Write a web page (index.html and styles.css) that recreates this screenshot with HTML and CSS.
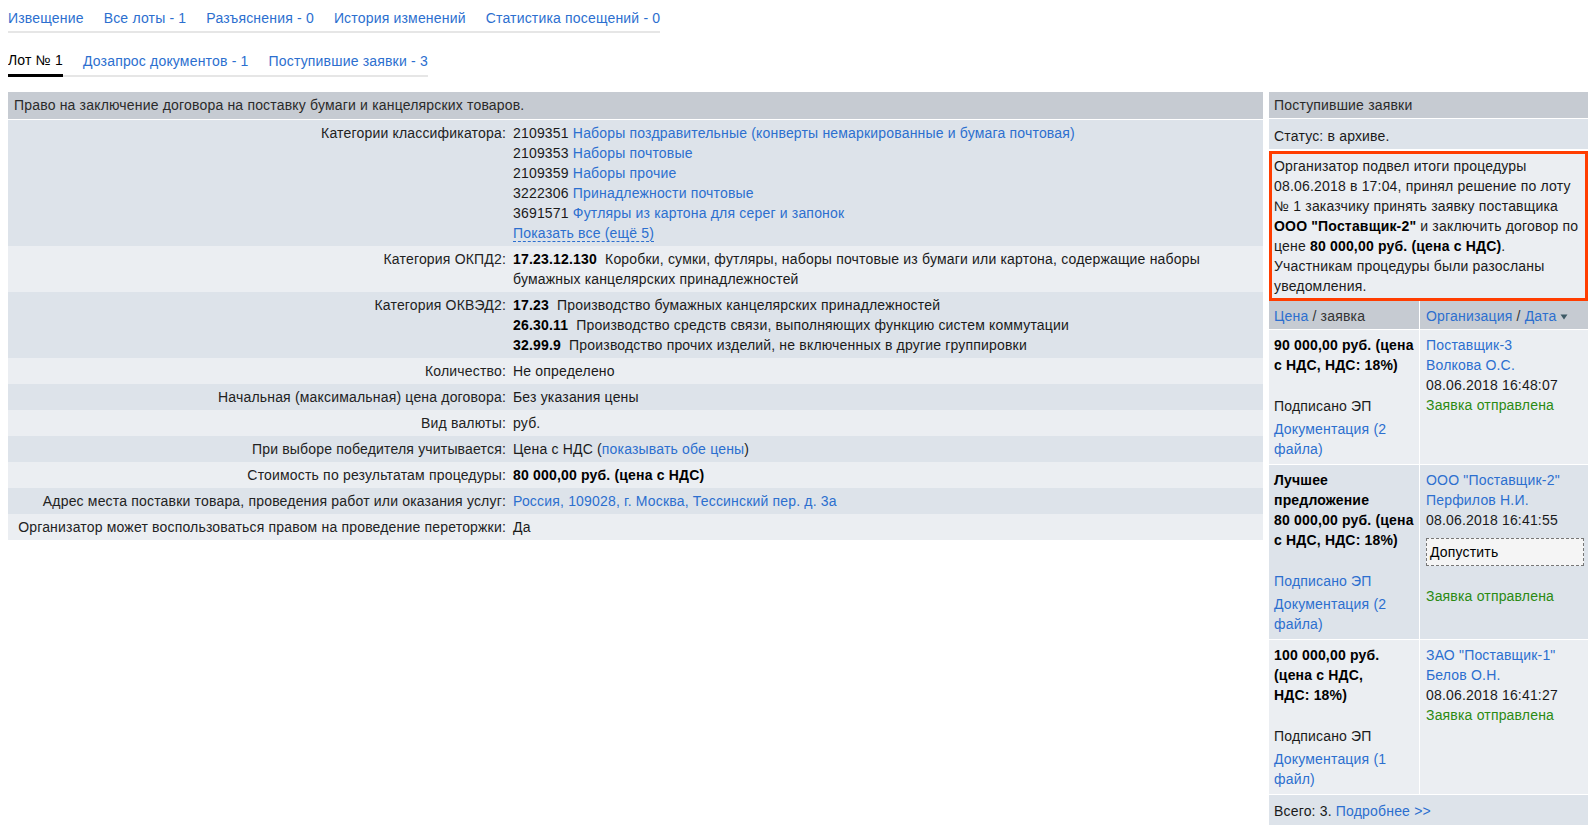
FILE: index.html
```html
<!DOCTYPE html>
<html lang="ru">
<head>
<meta charset="utf-8">
<title>Лот № 1</title>
<link rel="stylesheet" href="styles.css">
</head>
<body>
<nav class="tabs tabs-main">
  <a href="#">Извещение</a>
  <a href="#">Все лоты - 1</a>
  <a href="#">Разъяснения - 0</a>
  <a href="#">История изменений</a>
  <a href="#">Статистика посещений - 0</a>
</nav>
<nav class="tabs tabs-lot">
  <span class="tab active">Лот № 1</span>
  <a class="tab" href="#">Дозапрос документов - 1</a>
  <a class="tab" href="#">Поступившие заявки - 3</a>
</nav>
<div class="layout">
  <section class="lot">
    <div class="lot-title">Право на заключение договора на поставку бумаги и канцелярских товаров.</div>
    <div class="row dark">
      <div class="label">Категории классификатора:</div>
      <div class="value">
        <div>2109351 <a href="#">Наборы поздравительные (конверты немаркированные и бумага почтовая)</a></div>
        <div>2109353 <a href="#">Наборы почтовые</a></div>
        <div>2109359 <a href="#">Наборы прочие</a></div>
        <div>3222306 <a href="#">Принадлежности почтовые</a></div>
        <div>3691571 <a href="#">Футляры из картона для серег и запонок</a></div>
        <div><a class="dashed" href="#">Показать все (ещё 5)</a></div>
      </div>
    </div>
    <div class="row light">
      <div class="label">Категория ОКПД2:</div>
      <div class="value"><b>17.23.12.130</b>&nbsp; Коробки, сумки, футляры, наборы почтовые из бумаги или картона, содержащие наборы бумажных канцелярских принадлежностей</div>
    </div>
    <div class="row dark">
      <div class="label">Категория ОКВЭД2:</div>
      <div class="value">
        <div><b>17.23</b>&nbsp; Производство бумажных канцелярских принадлежностей</div>
        <div><b>26.30.11</b>&nbsp; Производство средств связи, выполняющих функцию систем коммутации</div>
        <div><b>32.99.9</b>&nbsp; Производство прочих изделий, не включенных в другие группировки</div>
      </div>
    </div>
    <div class="row light">
      <div class="label">Количество:</div>
      <div class="value">Не определено</div>
    </div>
    <div class="row dark">
      <div class="label">Начальная (максимальная) цена договора:</div>
      <div class="value">Без указания цены</div>
    </div>
    <div class="row light">
      <div class="label">Вид валюты:</div>
      <div class="value">руб.</div>
    </div>
    <div class="row dark">
      <div class="label">При выборе победителя учитывается:</div>
      <div class="value">Цена с НДС (<a href="#">показывать обе цены</a>)</div>
    </div>
    <div class="row light">
      <div class="label">Стоимость по результатам процедуры:</div>
      <div class="value"><b>80 000,00 руб. (цена с НДС)</b></div>
    </div>
    <div class="row dark">
      <div class="label">Адрес места поставки товара, проведения работ или оказания услуг:</div>
      <div class="value"><a href="#">Россия, 109028, г. Москва, Тессинский пер. д. 3а</a></div>
    </div>
    <div class="row light">
      <div class="label">Организатор может воспользоваться правом на проведение переторжки:</div>
      <div class="value">Да</div>
    </div>
  </section>

  <aside class="bids">
    <div class="bids-title">Поступившие заявки</div>
    <div class="bids-status">Статус: в архиве.</div>
    <div class="result">Организатор подвел итоги процедуры 08.06.2018 в 17:04, принял решение по лоту №&nbsp;1 заказчику принять заявку поставщика <b>ООО "Поставщик-2"</b> и заключить договор по цене <b>80 000,00 руб. (цена с НДС)</b>. Участникам процедуры были разосланы уведомления.</div>
    <div class="bid-table">
      <div class="bid-row head">
        <div class="cell c1"><a href="#">Цена</a> / заявка</div>
        <div class="cell c2"><a href="#">Организация</a> / <a href="#">Дата</a> <svg class="sort" width="8" height="6" viewBox="0 0 8 6"><path d="M0.5 0.5 L7.5 0.5 L4 5.5 Z" fill="#3d5a66"/></svg></div>
      </div>
      <div class="bid-row light">
        <div class="cell c1">
          <div class="price">90 000,00 руб. (цена с НДС, НДС:&nbsp;18%)</div>
          <div class="signed">Подписано ЭП</div>
          <div class="docs"><a href="#">Документация (2 файла)</a></div>
        </div>
        <div class="cell c2">
          <div><a href="#">Поставщик-3</a></div>
          <div><a href="#">Волкова О.С.</a></div>
          <div>08.06.2018 16:48:07</div>
          <div class="sent">Заявка отправлена</div>
        </div>
      </div>
      <div class="bid-row dark">
        <div class="cell c1">
          <div class="price">Лучшее предложение</div>
          <div class="price">80 000,00 руб. (цена с НДС, НДС:&nbsp;18%)</div>
          <div class="signed"><a href="#">Подписано ЭП</a></div>
          <div class="docs"><a href="#">Документация (2 файла)</a></div>
        </div>
        <div class="cell c2">
          <div><a href="#">ООО "Поставщик-2"</a></div>
          <div><a href="#">Перфилов Н.И.</a></div>
          <div>08.06.2018 16:41:55</div>
          <div class="admit">Допустить</div>
          <div class="sent sent-gap">Заявка отправлена</div>
        </div>
      </div>
      <div class="bid-row light">
        <div class="cell c1">
          <div class="price">100 000,00 руб. (цена с НДС, НДС:&nbsp;18%)</div>
          <div class="signed">Подписано ЭП</div>
          <div class="docs"><a href="#">Документация (1 файл)</a></div>
        </div>
        <div class="cell c2">
          <div><a href="#">ЗАО "Поставщик-1"</a></div>
          <div><a href="#">Белов О.Н.</a></div>
          <div>08.06.2018 16:41:27</div>
          <div class="sent">Заявка отправлена</div>
        </div>
      </div>
      <div class="bid-footer">Всего: 3. <a href="#">Подробнее &gt;&gt;</a></div>
    </div>
  </aside>
</div>
</body>
</html>
```

FILE: styles.css
```css
body {
  margin: 8px;
  font-family: "Liberation Sans", Arial, sans-serif;
  font-size: 14px;
  line-height: 20px;
  letter-spacing: 0.18px;
  color: #1a1a1a;
  background: #fff;
}

a {
  color: #2c6fcf;
  text-decoration: none;
}

b {
  font-weight: bold;
  color: #000;
}

.tabs {
  display: flex;
  width: fit-content;
  gap: 20px;
}

.tabs-main {
  padding-bottom: 3px;
  border-bottom: 2px solid #e6e6e6;
}

.tabs-lot {
  margin-top: 17px;
  align-items: flex-end;
  border-bottom: 2px solid #e6e6e6;
}

.tabs-lot .tab {
  padding-bottom: 4px;
}

.tabs-lot .active {
  color: #000;
  border-bottom: 3px solid #000;
  margin-bottom: -2px;
}

.layout {
  display: flex;
  gap: 6px;
  margin-top: 15px;
  align-items: flex-start;
}

/* left lot table */
.lot {
  flex: 1;
  min-width: 0;
}

.lot-title {
  background: #c6cbd2;
  color: #2a2a2a;
  padding: 3px 6px 4px;
  border-bottom: 1px solid #fff;
}

.row {
  display: grid;
  grid-template-columns: 501px 1fr;
}

.dark {
  background: #dde3ea;
}

.light {
  background: #ebeef2;
}

.label {
  text-align: right;
  padding: 3px 3px 3px 0;
  color: #222;
}

.value {
  padding: 3px 4px;
}

.dashed {
  border-bottom: 1px dashed #2c6fcf;
}

/* right bids panel */
.bids {
  width: 319px;
  flex: none;
}

.bids-title {
  background: #c6cbd2;
  color: #2a2a2a;
  padding: 3px 5px 3px;
  border-bottom: 1px solid #fff;
}

.bids-status {
  background: #dde3ea;
  padding: 7px 5px 3px;
  margin-bottom: 2px;
}

.result {
  background: #ebeef2;
  border: 3px solid #ff3d00;
  padding: 2px 2px 2px;
}

.bid-table {
  display: flex;
  flex-direction: column;
  gap: 1px;
}

.bid-row {
  display: grid;
  grid-template-columns: 150px 1fr;
  column-gap: 1px;
  background: #fff;
}

.bid-row.head .cell {
  background: #c6cbd2;
  padding-top: 5px;
  padding-bottom: 3px;
  color: #333;
}

.bid-row.light .cell {
  background: #ebeef2;
}

.bid-row.dark .cell {
  background: #dde3ea;
}

.cell {
  padding: 5px 3px 5px 5px;
}

.cell.c2 {
  padding-left: 6px;
}

.sort {
  vertical-align: 1px;
}

.price {
  font-weight: bold;
  color: #000;
}

.signed {
  margin-top: 21px;
}

.docs {
  margin-top: 3px;
}

.sent {
  color: #2a8a12;
}

.sent-gap {
  margin-top: 20px;
}

.admit {
  margin-top: 8px;
  border: 1px dashed #777;
  background: #f5f5f5;
  color: #000;
  padding: 3px;
  line-height: 20px;
  margin-right: 1px;
}

.bid-footer {
  background: #dde3ea;
  padding: 6px 5px 4px;
}
```
